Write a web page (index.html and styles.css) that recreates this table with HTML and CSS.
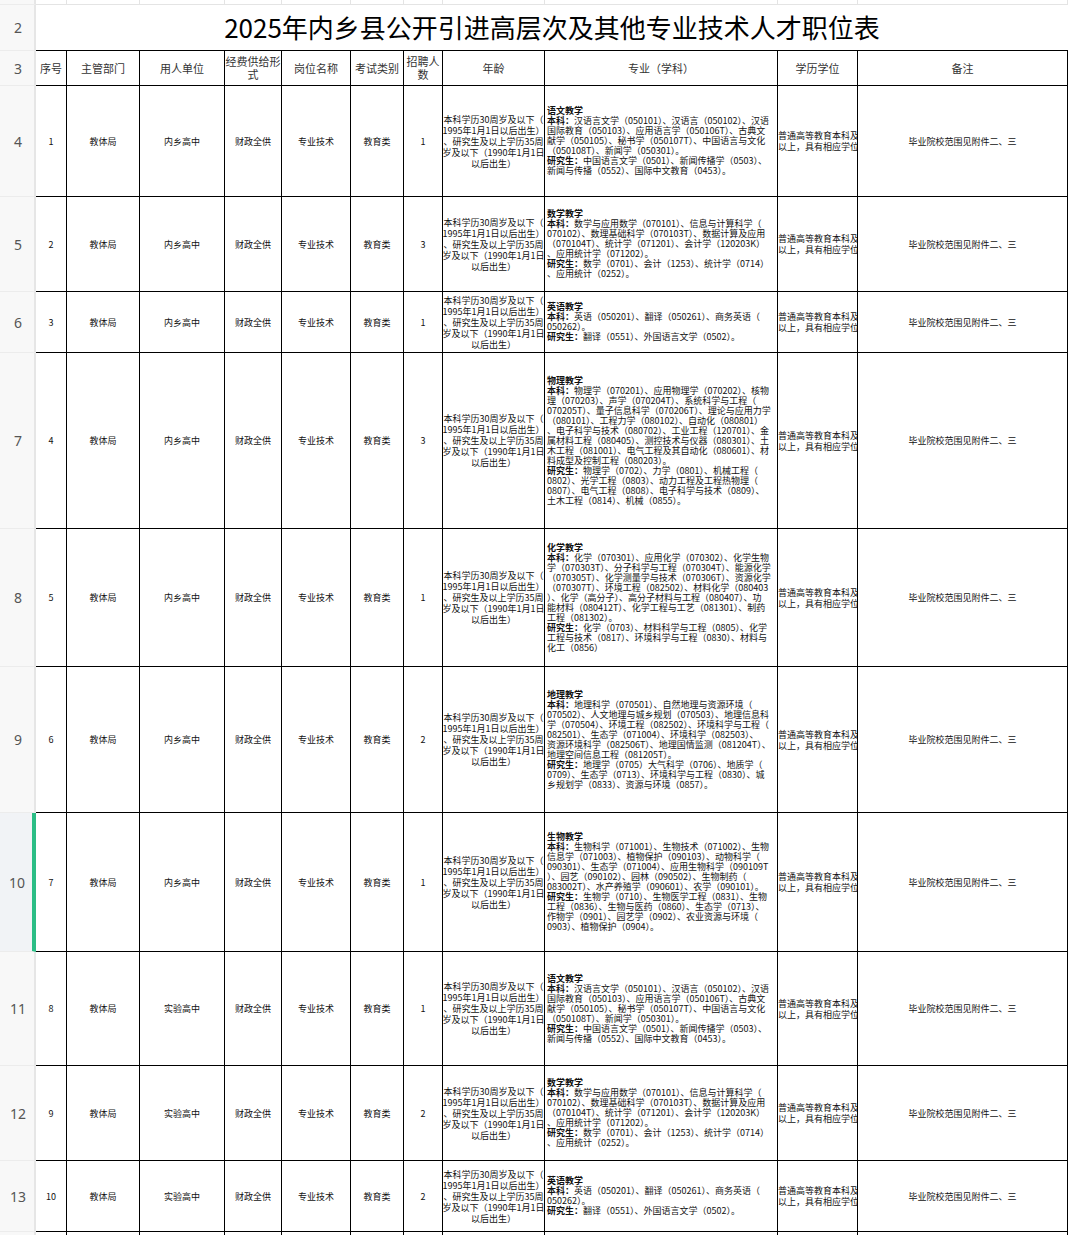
FILE: index.html
```html
<!DOCTYPE html>
<html lang="zh-CN">
<head>
<meta charset="utf-8">
<title>2025年内乡县公开引进高层次及其他专业技术人才职位表</title>
<link rel="stylesheet" href="styles.css">
</head>
<body>
<div class="sheet">
  <!-- row 1 (partial) -->
  <div class="rh"></div>
  <div class="top"></div><div class="top"></div><div class="top"></div><div class="top"></div><div class="top"></div><div class="top"></div><div class="top"></div><div class="top"></div><div class="top"></div><div class="top"></div><div class="top"></div>

  <!-- row 2 title -->
  <div class="rh">2</div>
  <div class="title">2025年内乡县公开引进高层次及其他专业技术人才职位表</div>

  <!-- row 3 header -->
  <div class="rh">3</div>
  <div class="c hd">序号</div>
  <div class="c hd">主管部门</div>
  <div class="c hd">用人单位</div>
  <div class="c hd">经费供给形<br>式</div>
  <div class="c hd">岗位名称</div>
  <div class="c hd">考试类别</div>
  <div class="c hd">招聘人<br>数</div>
  <div class="c hd">年龄</div>
  <div class="c hd">专业（学科）</div>
  <div class="c hd">学历学位</div>
  <div class="c hd">备注</div>

  <!-- row 4 -->
  <div class="rh">4</div>
  <div class="c">1</div><div class="c">教体局</div><div class="c">内乡高中</div><div class="c">财政全供</div><div class="c">专业技术</div><div class="c">教育类</div><div class="c">1</div>
  <div class="c age"><span>本科学历30周岁及以下（</span><span>1995年1月1日以后出生）</span><span>、研究生及以上学历35周</span><span>岁及以下（1990年1月1日</span><span>以后出生）</span></div>
  <div class="c major"><div>
    <div class="ln"><b>语文教学</b></div>
    <div class="ln"><b>本科：</b>汉语言文学（050101）、汉语言（050102）、汉语</div>
    <div class="ln">国际教育（050103）、应用语言学（050106T）、古典文</div>
    <div class="ln">献学（050105）、秘书学（050107T）、中国语言与文化</div>
    <div class="ln">（050108T）、新闻学（050301）。</div>
    <div class="ln"><b>研究生：</b>中国语言文学（0501）、新闻传播学（0503）、</div>
    <div class="ln">新闻与传播（0552）、国际中文教育（0453）。</div>
  </div></div>
  <div class="c edu"><div>普通高等教育本科及<br>以上，具有相应学位</div></div>
  <div class="c">毕业院校范围见附件二、三</div>

  <!-- row 5 -->
  <div class="rh">5</div>
  <div class="c">2</div><div class="c">教体局</div><div class="c">内乡高中</div><div class="c">财政全供</div><div class="c">专业技术</div><div class="c">教育类</div><div class="c">3</div>
  <div class="c age"><span>本科学历30周岁及以下（</span><span>1995年1月1日以后出生）</span><span>、研究生及以上学历35周</span><span>岁及以下（1990年1月1日</span><span>以后出生）</span></div>
  <div class="c major"><div>
    <div class="ln"><b>数学教学</b></div>
    <div class="ln"><b>本科：</b>数学与应用数学（070101）、信息与计算科学（</div>
    <div class="ln">070102）、数理基础科学（070103T）、数据计算及应用</div>
    <div class="ln">（070104T）、统计学（071201）、会计学（120203K）</div>
    <div class="ln">、应用统计学（071202）。</div>
    <div class="ln"><b>研究生：</b>数学（0701）、会计（1253）、统计学（0714）</div>
    <div class="ln">、应用统计（0252）。</div>
  </div></div>
  <div class="c edu"><div>普通高等教育本科及<br>以上，具有相应学位</div></div>
  <div class="c">毕业院校范围见附件二、三</div>

  <!-- row 6 -->
  <div class="rh">6</div>
  <div class="c">3</div><div class="c">教体局</div><div class="c">内乡高中</div><div class="c">财政全供</div><div class="c">专业技术</div><div class="c">教育类</div><div class="c">1</div>
  <div class="c age"><span>本科学历30周岁及以下（</span><span>1995年1月1日以后出生）</span><span>、研究生及以上学历35周</span><span>岁及以下（1990年1月1日</span><span>以后出生）</span></div>
  <div class="c major"><div>
    <div class="ln"><b>英语教学</b></div>
    <div class="ln"><b>本科：</b>英语（050201）、翻译（050261）、商务英语（</div>
    <div class="ln">050262）。</div>
    <div class="ln"><b>研究生：</b>翻译（0551）、外国语言文学（0502）。</div>
  </div></div>
  <div class="c edu"><div>普通高等教育本科及<br>以上，具有相应学位</div></div>
  <div class="c">毕业院校范围见附件二、三</div>

  <!-- row 7 -->
  <div class="rh">7</div>
  <div class="c">4</div><div class="c">教体局</div><div class="c">内乡高中</div><div class="c">财政全供</div><div class="c">专业技术</div><div class="c">教育类</div><div class="c">3</div>
  <div class="c age"><span>本科学历30周岁及以下（</span><span>1995年1月1日以后出生）</span><span>、研究生及以上学历35周</span><span>岁及以下（1990年1月1日</span><span>以后出生）</span></div>
  <div class="c major"><div>
    <div class="ln"><b>物理教学</b></div>
    <div class="ln"><b>本科：</b>物理学（070201）、应用物理学（070202）、核物</div>
    <div class="ln">理（070203）、声学（070204T）、系统科学与工程（</div>
    <div class="ln">070205T）、量子信息科学（070206T）、理论与应用力学</div>
    <div class="ln">（080101）、工程力学（080102）、自动化（080801）</div>
    <div class="ln">、电子科学与技术（080702）、工业工程（120701）、金</div>
    <div class="ln">属材料工程（080405）、测控技术与仪器（080301）、土</div>
    <div class="ln">木工程（081001）、电气工程及其自动化（080601）、材</div>
    <div class="ln">料成型及控制工程（080203）。</div>
    <div class="ln"><b>研究生：</b>物理学（0702）、力学（0801）、机械工程（</div>
    <div class="ln">0802）、光学工程（0803）、动力工程及工程热物理（</div>
    <div class="ln">0807）、电气工程（0808）、电子科学与技术（0809）、</div>
    <div class="ln">土木工程（0814）、机械（0855）。</div>
  </div></div>
  <div class="c edu"><div>普通高等教育本科及<br>以上，具有相应学位</div></div>
  <div class="c">毕业院校范围见附件二、三</div>

  <!-- row 8 -->
  <div class="rh">8</div>
  <div class="c">5</div><div class="c">教体局</div><div class="c">内乡高中</div><div class="c">财政全供</div><div class="c">专业技术</div><div class="c">教育类</div><div class="c">1</div>
  <div class="c age"><span>本科学历30周岁及以下（</span><span>1995年1月1日以后出生）</span><span>、研究生及以上学历35周</span><span>岁及以下（1990年1月1日</span><span>以后出生）</span></div>
  <div class="c major"><div>
    <div class="ln"><b>化学教学</b></div>
    <div class="ln"><b>本科：</b>化学（070301）、应用化学（070302）、化学生物</div>
    <div class="ln">学（070303T）、分子科学与工程（070304T）、能源化学</div>
    <div class="ln">（070305T）、化学测量学与技术（070306T）、资源化学</div>
    <div class="ln">（070307T）、环境工程（082502）、材料化学（080403</div>
    <div class="ln">）、化学（高分子）、高分子材料与工程（080407）、功</div>
    <div class="ln">能材料（080412T）、化学工程与工艺（081301）、制药</div>
    <div class="ln">工程（081302）。</div>
    <div class="ln"><b>研究生：</b>化学（0703）、材料科学与工程（0805）、化学</div>
    <div class="ln">工程与技术（0817）、环境科学与工程（0830）、材料与</div>
    <div class="ln">化工（0856）</div>
  </div></div>
  <div class="c edu"><div>普通高等教育本科及<br>以上，具有相应学位</div></div>
  <div class="c">毕业院校范围见附件二、三</div>

  <!-- row 9 -->
  <div class="rh">9</div>
  <div class="c">6</div><div class="c">教体局</div><div class="c">内乡高中</div><div class="c">财政全供</div><div class="c">专业技术</div><div class="c">教育类</div><div class="c">2</div>
  <div class="c age"><span>本科学历30周岁及以下（</span><span>1995年1月1日以后出生）</span><span>、研究生及以上学历35周</span><span>岁及以下（1990年1月1日</span><span>以后出生）</span></div>
  <div class="c major"><div>
    <div class="ln"><b>地理教学</b></div>
    <div class="ln"><b>本科：</b>地理科学（070501）、自然地理与资源环境（</div>
    <div class="ln">070502）、人文地理与城乡规划（070503）、地理信息科</div>
    <div class="ln">学（070504）、环境工程（082502）、环境科学与工程（</div>
    <div class="ln">082501）、生态学（071004）、环境科学（082503）、</div>
    <div class="ln">资源环境科学（082506T）、地理国情监测（081204T）、</div>
    <div class="ln">地理空间信息工程（081205T）。</div>
    <div class="ln"><b>研究生：</b>地理学（0705）大气科学（0706）、地质学（</div>
    <div class="ln">0709）、生态学（0713）、环境科学与工程（0830）、城</div>
    <div class="ln">乡规划学（0833）、资源与环境（0857）。</div>
  </div></div>
  <div class="c edu"><div>普通高等教育本科及<br>以上，具有相应学位</div></div>
  <div class="c">毕业院校范围见附件二、三</div>

  <!-- row 10 (selected) -->
  <div class="rh sel">10</div>
  <div class="c">7</div><div class="c">教体局</div><div class="c">内乡高中</div><div class="c">财政全供</div><div class="c">专业技术</div><div class="c">教育类</div><div class="c">1</div>
  <div class="c age"><span>本科学历30周岁及以下（</span><span>1995年1月1日以后出生）</span><span>、研究生及以上学历35周</span><span>岁及以下（1990年1月1日</span><span>以后出生）</span></div>
  <div class="c major"><div>
    <div class="ln"><b>生物教学</b></div>
    <div class="ln"><b>本科：</b>生物科学（071001）、生物技术（071002）、生物</div>
    <div class="ln">信息学（071003）、植物保护（090103）、动物科学（</div>
    <div class="ln">090301）、生态学（071004）、应用生物科学（090109T</div>
    <div class="ln">）、园艺（090102）、园林（090502）、生物制药（</div>
    <div class="ln">083002T）、水产养殖学（090601）、农学（090101）。</div>
    <div class="ln"><b>研究生：</b>生物学（0710）、生物医学工程（0831）、生物</div>
    <div class="ln">工程（0836）、生物与医药（0860）、生态学（0713）、</div>
    <div class="ln">作物学（0901）、园艺学（0902）、农业资源与环境（</div>
    <div class="ln">0903）、植物保护（0904）。</div>
  </div></div>
  <div class="c edu"><div>普通高等教育本科及<br>以上，具有相应学位</div></div>
  <div class="c">毕业院校范围见附件二、三</div>

  <!-- row 11 -->
  <div class="rh">11</div>
  <div class="c">8</div><div class="c">教体局</div><div class="c">实验高中</div><div class="c">财政全供</div><div class="c">专业技术</div><div class="c">教育类</div><div class="c">1</div>
  <div class="c age"><span>本科学历30周岁及以下（</span><span>1995年1月1日以后出生）</span><span>、研究生及以上学历35周</span><span>岁及以下（1990年1月1日</span><span>以后出生）</span></div>
  <div class="c major"><div>
    <div class="ln"><b>语文教学</b></div>
    <div class="ln"><b>本科：</b>汉语言文学（050101）、汉语言（050102）、汉语</div>
    <div class="ln">国际教育（050103）、应用语言学（050106T）、古典文</div>
    <div class="ln">献学（050105）、秘书学（050107T）、中国语言与文化</div>
    <div class="ln">（050108T）、新闻学（050301）。</div>
    <div class="ln"><b>研究生：</b>中国语言文学（0501）、新闻传播学（0503）、</div>
    <div class="ln">新闻与传播（0552）、国际中文教育（0453）。</div>
  </div></div>
  <div class="c edu"><div>普通高等教育本科及<br>以上，具有相应学位</div></div>
  <div class="c">毕业院校范围见附件二、三</div>

  <!-- row 12 -->
  <div class="rh">12</div>
  <div class="c">9</div><div class="c">教体局</div><div class="c">实验高中</div><div class="c">财政全供</div><div class="c">专业技术</div><div class="c">教育类</div><div class="c">2</div>
  <div class="c age"><span>本科学历30周岁及以下（</span><span>1995年1月1日以后出生）</span><span>、研究生及以上学历35周</span><span>岁及以下（1990年1月1日</span><span>以后出生）</span></div>
  <div class="c major"><div>
    <div class="ln"><b>数学教学</b></div>
    <div class="ln"><b>本科：</b>数学与应用数学（070101）、信息与计算科学（</div>
    <div class="ln">070102）、数理基础科学（070103T）、数据计算及应用</div>
    <div class="ln">（070104T）、统计学（071201）、会计学（120203K）</div>
    <div class="ln">、应用统计学（071202）。</div>
    <div class="ln"><b>研究生：</b>数学（0701）、会计（1253）、统计学（0714）</div>
    <div class="ln">、应用统计（0252）。</div>
  </div></div>
  <div class="c edu"><div>普通高等教育本科及<br>以上，具有相应学位</div></div>
  <div class="c">毕业院校范围见附件二、三</div>

  <!-- row 13 -->
  <div class="rh">13</div>
  <div class="c">10</div><div class="c">教体局</div><div class="c">实验高中</div><div class="c">财政全供</div><div class="c">专业技术</div><div class="c">教育类</div><div class="c">2</div>
  <div class="c age"><span>本科学历30周岁及以下（</span><span>1995年1月1日以后出生）</span><span>、研究生及以上学历35周</span><span>岁及以下（1990年1月1日</span><span>以后出生）</span></div>
  <div class="c major"><div>
    <div class="ln"><b>英语教学</b></div>
    <div class="ln"><b>本科：</b>英语（050201）、翻译（050261）、商务英语（</div>
    <div class="ln">050262）。</div>
    <div class="ln"><b>研究生：</b>翻译（0551）、外国语言文学（0502）。</div>
  </div></div>
  <div class="c edu"><div>普通高等教育本科及<br>以上，具有相应学位</div></div>
  <div class="c">毕业院校范围见附件二、三</div>

  <!-- row 14 (partial) -->
  <div class="rh"></div>
  <div class="c"></div><div class="c"></div><div class="c"></div><div class="c"></div><div class="c"></div><div class="c"></div><div class="c"></div><div class="c"></div><div class="c"></div><div class="c"></div><div class="c"></div>
</div>
</body>
</html>
```

FILE: styles.css
```css
html, body {
  margin: 0;
  padding: 0;
  background: #fff;
}

body {
  width: 1068px;
  height: 1235px;
  overflow: hidden;
  font-family: "Noto Sans CJK SC", "Noto Sans", sans-serif;
  color: #000;
}

.sheet {
  display: grid;
  grid-template-columns: 36px 31px 73px 85px 57px 69px 53px 39px 102px 233px 80px 210px;
  grid-template-rows: 5px 46px 35px 111px 95px 61px 176px 138px 146px 139px 114px 95px 71px 20px;
}

.sheet > div {
  box-sizing: border-box;
  overflow: hidden;
  min-width: 0;
}

.rh {
  background: #f8f8f8;
  border-right: 2px solid #e6e6e6;
  border-bottom: 1px solid #ececec;
  display: flex;
  align-items: center;
  justify-content: center;
  padding-left: 2px;
  font-family: "Noto Sans", "Liberation Sans", sans-serif;
  font-size: 14px;
  color: #555;
}

.rh.sel {
  background: #f1f3f6;
  border-right: 4px solid #2bbd85;
}

.top {
  border-right: 1px solid #e4e4e4;
  border-bottom: 1px solid #e4e4e4;
}

.title {
  grid-column: span 11;
  border-bottom: 1px solid #000;
  display: flex;
  align-items: center;
  justify-content: center;
  padding-bottom: 2px;
  font-size: 26px;
  white-space: nowrap;
}

.c {
  border-right: 1px solid #000;
  border-bottom: 1px solid #000;
  display: flex;
  align-items: center;
  justify-content: center;
  text-align: center;
  font-size: 9px;
  line-height: 11px;
  color: #111;
}

.hd {
  font-size: 11px;
  line-height: 13px;
  color: #333;
}

.age {
  flex-direction: column;
}

.age span {
  white-space: nowrap;
}

.major {
  justify-content: flex-start;
  text-align: left;
  padding-left: 2px;
  line-height: 10px;
}

.major .ln {
  white-space: nowrap;
}

.edu {
  justify-content: flex-start;
  text-align: left;
  white-space: nowrap;
}
```
